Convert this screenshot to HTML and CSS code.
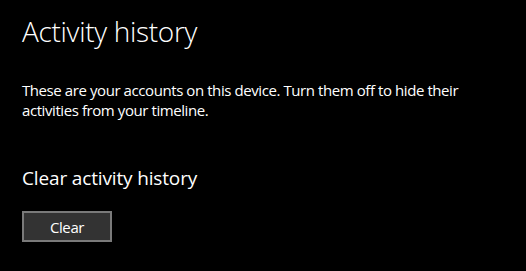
FILE: index.html
```html
<!DOCTYPE html>
<html lang="en">
<head>
<meta charset="utf-8">
<title>Activity history</title>
<link rel="stylesheet" href="styles.css">
</head>
<body>
<main class="page">
  <h1 class="title">Activity history</h1>
  <p class="desc">These are your accounts on this device. Turn them off to hide their activities from your timeline.</p>
  <h2 class="subtitle">Clear activity history</h2>
  <button class="btn" type="button">Clear</button>
</main>
</body>
</html>
```

FILE: styles.css
```css
html, body {
  margin: 0;
  padding: 0;
  background: #000;
}
body {
  width: 526px;
  height: 271px;
  overflow: hidden;
  font-family: "Open Sans", "Noto Sans", sans-serif;
  color: #fff;
}
.page {
  display: flex;
  flex-direction: column;
  align-items: flex-start;
  padding: 11px 0 0 22px;
}
.title {
  margin: 0;
  font-size: 28px;
  line-height: 40px;
  font-weight: 300;
  letter-spacing: -0.3px;
}
.desc {
  margin: 29px 0 0;
  width: 460px;
  font-size: 15px;
  line-height: 20px;
  letter-spacing: -0.42px;
}
.subtitle {
  margin: 44px 0 0;
  font-size: 19px;
  line-height: 28px;
  font-weight: 400;
  letter-spacing: -0.15px;
}
.btn {
  margin-top: 19px;
  width: 90px;
  height: 31px;
  box-sizing: border-box;
  background: #333;
  border: 2px solid #7a7a7a;
  color: #fff;
  font-family: inherit;
  font-size: 15px;
  letter-spacing: -0.4px;
  padding: 0;
}
```
